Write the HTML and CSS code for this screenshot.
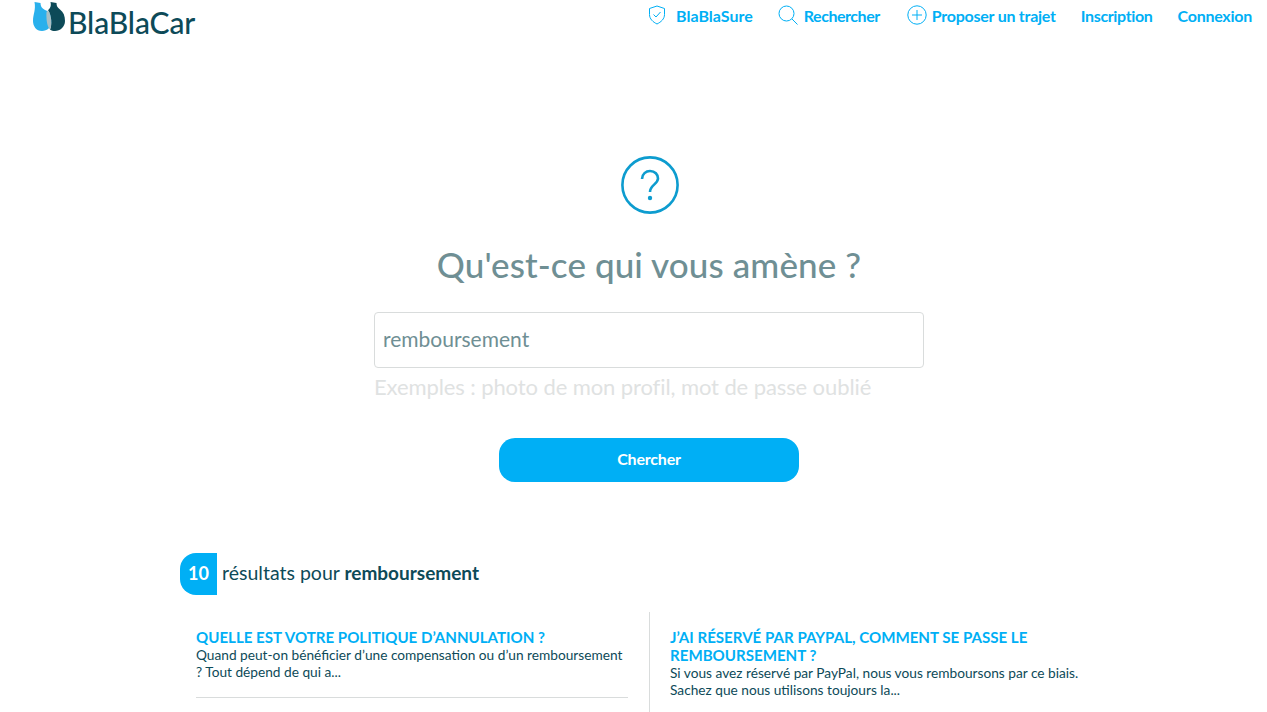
FILE: index.html
```html
<!DOCTYPE html>
<html lang="fr">

<head>
    <meta charset="UTF-8">
    <title>BlaBlaCar - Aide</title>
    <link rel="stylesheet" href="styles.css">
</head>

<body>
    <header class="topbar">
        <a class="logo" href="#">
            <svg class="logo-mark" width="34" height="31" viewBox="0 0 34 31">
                <path d="M2.5 1 L8.5 2 C8.5 5 9.5 7 13 9 C18 11 20 15 20 20 C20 26 15 30 10 30 C4 30 1 25 1 20 C1 13 4 9 2.5 1 Z" fill="#29b0ec"/>
                <path d="M18.5 1 L24.5 2 C24.5 5 25.5 6.5 28 8.5 C31.5 11 33 15 33 20 C33 26 28 30 23 30 C21 30 19.5 29.5 18 28.5 C20 24 20 15 16 9.2 C18 7.5 19.5 5 18.5 1 Z" fill="#0d4a58"/>
                <path d="M16 9.2 C20 15 20 24 18 28.5 C15.5 26 14 20 14.5 11 Z" fill="#a9bfc4"/>
            </svg>
            <span class="logo-text">BlaBlaCar</span>
        </a>
        <nav class="menu">
            <a class="menu-item" href="#">
                <svg width="18" height="20" viewBox="0 0 18 20" fill="none" stroke="#00aff5" stroke-width="1">
                    <path d="M9 1 L16.5 3.5 V9.5 C16.5 14 13 17 9 19 C5 17 1.5 14 1.5 9.5 V3.5 Z"/>
                    <path d="M5.5 9.5 L8 12 L12.5 7"/>
                </svg>
                <span class="gap-lg">BlaBlaSure</span>
            </a>
            <a class="menu-item menu-search" href="#">
                <svg width="20" height="20" viewBox="0 0 20 20" fill="none" stroke="#00aff5" stroke-width="1">
                    <circle cx="8.5" cy="8.5" r="7.5"/>
                    <path d="M14 14 L19.5 19.5"/>
                </svg>
                <span class="gap-md">Rechercher</span>
            </a>
            <a class="menu-item" href="#">
                <svg width="20" height="20" viewBox="0 0 20 20" fill="none" stroke="#00aff5" stroke-width="1">
                    <circle cx="10" cy="10" r="9.2"/>
                    <path d="M10 5 V15 M5 10 H15"/>
                </svg>
                <span class="gap-sm">Proposer un trajet</span>
            </a>
            <a class="menu-item menu-tight" href="#">Inscription</a>
            <a class="menu-item" href="#">Connexion</a>
        </nav>
    </header>

    <main class="search">
        <svg class="help-icon" width="58" height="58" viewBox="0 0 58 58" fill="none" stroke="#0d9ccf" stroke-width="2.6">
            <circle cx="29" cy="29" r="27.6"/>
            <path d="M21 23 C21 18 25 15 29 15 C34 15 37 18.5 37 22.5 C37 28 29 29 29 36"/>
            <circle cx="29" cy="42" r="2.2" fill="#0d9ccf" stroke="none"/>
        </svg>
        <h1 class="title">Qu'est-ce qui vous amène ?</h1>
        <div class="field">remboursement</div>
        <p class="hint">Exemples : photo de mon profil, mot de passe oublié</p>
        <button class="search-btn">Chercher</button>
    </main>

    <section class="results">
        <div class="count">
            <span class="count-badge">10</span>
            <span class="count-text">résultats pour <b>remboursement</b></span>
        </div>
        <div class="result-grid">
            <article class="result result-left">
                <h2>QUELLE EST VOTRE POLITIQUE D’ANNULATION ?</h2>
                <p>Quand peut-on bénéficier d’une compensation ou d’un remboursement ? Tout dépend de qui a...</p>
            </article>
            <article class="result result-right">
                <h2>J’AI RÉSERVÉ PAR PAYPAL, COMMENT SE PASSE LE REMBOURSEMENT ?</h2>
                <p>Si vous avez réservé par PayPal, nous vous remboursons par ce biais. Sachez que nous utilisons toujours la...</p>
            </article>
        </div>
    </section>
</body>

</html>
```

FILE: styles.css
```css
html, body {
    height: 712px;
    overflow: hidden;
}

body {
    margin: 0;
    background-color: #fff;
    font-family: "Lato", "Liberation Sans", sans-serif;
    color: #0d4a58;
}

a {
    text-decoration: none;
}

.topbar {
    display: flex;
    justify-content: space-between;
    align-items: flex-start;
    height: 50px;
    padding: 0 15px 0 32px;
}

.logo {
    display: flex;
    align-items: flex-start;
    color: #0d4a58;
}

.logo-mark {
    margin-top: 1px;
    margin-right: 2px;
}

.logo-text {
    margin-top: 5px;
    font-size: 30px;
    line-height: 34px;
    font-weight: 500;
    letter-spacing: -0.1px;
}

.menu {
    display: flex;
    gap: 25px;
    padding-top: 5px;
}

.menu-item {
    display: flex;
    align-items: center;
    height: 20px;
    color: #00aff5;
    font-size: 16px;
    font-weight: 700;
    letter-spacing: -0.25px;
}

.menu-search {
    margin-right: 2px;
    letter-spacing: -0.45px;
}

.menu-tight {
    letter-spacing: -0.35px;
}

.gap-lg {
    margin-left: 10px;
    letter-spacing: 0;
}

.gap-md {
    margin-left: 6px;
}

.gap-sm {
    margin-left: 5px;
}

.search {
    display: flex;
    flex-direction: column;
    align-items: center;
    padding: 106px 0 0 31px;
}

.help-icon {
    display: block;
    margin-left: 2px;
}

.title {
    margin: 28px 0 0;
    font-size: 35px;
    line-height: 44px;
    font-weight: 500;
    color: #6f8f94;
    letter-spacing: 0.1px;
}

.field {
    box-sizing: border-box;
    width: 550px;
    height: 56px;
    margin-top: 26px;
    padding: 0 8px;
    border: 1px solid #d9dcdc;
    border-radius: 4px;
    font-size: 21px;
    line-height: 52px;
    color: #6f8f94;
}

.hint {
    width: 550px;
    margin: 6px 0 0;
    font-size: 22px;
    line-height: 26px;
    letter-spacing: -0.1px;
    color: #dfe2e2;
}

.search-btn {
    width: 300px;
    height: 44px;
    margin-top: 38px;
    padding-bottom: 4px;
    border: 0;
    border-radius: 16px;
    background-color: #00aff5;
    color: #fff;
    font-family: inherit;
    font-size: 16px;
    font-weight: 700;
    letter-spacing: -0.2px;
}

.results {
    width: 907px;
    margin: 71px 0 0 180px;
}

.count {
    display: flex;
    align-items: center;
}

.count-badge {
    width: 37px;
    height: 42px;
    border-radius: 16px 0 0 16px;
    background-color: #00aff5;
    color: #fff;
    font-size: 18px;
    font-weight: 700;
    line-height: 40px;
    text-align: center;
}

.count-text {
    margin-left: 5px;
    padding-bottom: 4px;
    font-size: 19.5px;
}

.count-text b {
    font-size: 19px;
    font-weight: 700;
}

.result-grid {
    display: grid;
    grid-template-columns: 469px 1fr;
    margin-top: 17px;
}

.result h2 {
    margin: 0;
    font-size: 15.1px;
    line-height: 18px;
    font-weight: 700;
    color: #00aff5;
}

.result p {
    margin: 1px 0 0;
    font-size: 13.7px;
    line-height: 16.5px;
}

.result-left {
    height: 86px;
    margin-left: 16px;
    padding-top: 16px;
    padding-right: 21px;
    background: linear-gradient(#d9dcdc, #d9dcdc) left 85px / 432px 1px no-repeat;
}

.result-right {
    padding: 16px 0 0 20px;
    border-left: 1px solid #d9dcdc;
    height: 100px;
}
```
